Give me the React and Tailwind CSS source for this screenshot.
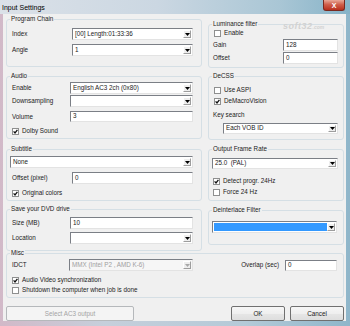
import React from 'react';

const Arrow = ({ disabled }) => (
  <svg width="5" height="3" viewBox="0 0 5 3">
    <path d="M0 0h5L2.5 3z" fill={disabled ? '#a8a8a8' : '#000'} />
  </svg>
);

const Tick = () => (
  <svg width="5" height="5" viewBox="0 0 5 5">
    <path d="M0.6 2.4L2 3.9L4.4 0.9" fill="none" stroke="#111" strokeWidth="1.3" />
  </svg>
);

function Group({ label, className = '', children }) {
  return (
    <div className={`relative rounded-[3px] border border-[#d5dfe5] ${className}`}>
      <span className="absolute -top-[5px] left-[3px] bg-[#f0f0f0] px-[1px] leading-[8px]">{label}</span>
      {children}
    </div>
  );
}

function Combo({ value, className = '', disabled, selected }) {
  return (
    <div
      className={`flex border border-t-[#7b7f86] border-l-[#7b7f86] border-r-[#e3e3e3] border-b-[#e3e3e3] p-[1px] ${
        disabled ? 'bg-[#f6f6f6] text-[#a0a0a0]' : 'bg-white'
      } ${className}`}
    >
      <div className={`flex flex-1 items-center truncate pl-[1px] leading-none ${selected ? 'bg-[#3399ff]' : ''}`}>{value}</div>
      <div className="flex w-[8px] items-center justify-center border border-t-white border-l-white border-r-[#9d9d9d] border-b-[#9d9d9d] bg-[#eeeeee]">
        <Arrow disabled={disabled} />
      </div>
    </div>
  );
}

function Field({ value, className = '' }) {
  return (
    <div
      className={`flex items-center border border-t-[#7b7f86] border-l-[#7b7f86] border-r-[#e3e3e3] border-b-[#e3e3e3] bg-white pl-[2px] leading-none ${className}`}
    >
      {value}
    </div>
  );
}

function Check({ label, checked, className = '' }) {
  return (
    <div className={`flex h-[8px] items-center ${className}`}>
      <span className="flex h-[7px] w-[7px] shrink-0 items-center justify-center border border-[#8e8f8f] bg-white">
        {checked && <Tick />}
      </span>
      <span className="ml-[3px] leading-[8px]">{label}</span>
    </div>
  );
}

export default function App() {
  return (
    <div className="flex h-[326px] w-[350px] flex-col bg-[linear-gradient(90deg,#d2b9c8_0%,#c6cfdb_30%,#b4cad8_70%,#8fb6ca_100%)] pl-[3px] pr-[4px] pb-[5px] font-[family-name:Liberation_Sans,Arial,sans-serif] text-[6.3px] text-[#1b1b1b]">
      {/* Title bar */}
      <div className="-ml-[3px] -mr-[4px] flex h-[14px] items-start justify-between bg-[linear-gradient(90deg,#dbe1e8_0%,#cbd7e2_45%,#a9c6d5_80%,#86b3c8_100%)]">
        <span className="pl-[2px] pt-[3px] text-[7px] leading-[9px] text-black">Input Settings</span>
        <div className="mr-[5px] flex h-[11px] w-[22px] items-center justify-center rounded-b-[3px] border border-t-0 border-[#7a2a20] bg-[linear-gradient(180deg,#e8a898_0%,#d0604c_45%,#b8301e_100%)] text-[7px] font-bold leading-none text-white">
          X
        </div>
      </div>

      {/* Body */}
      <div className="flex flex-1 flex-col bg-[#f0f0f0] pl-[3px] pr-[2px]">
        <div className="flex h-[237px] gap-[6px]">
          {/* Left column */}
          <div className="flex w-[196px] flex-col">
            <Group label="Program Chain" className="mt-[5px] h-[48px] pt-[8px] pl-[5px] pr-[8px]">
              <div className="flex items-center">
                <span className="w-[60px] shrink-0">Index</span>
                <Combo className="h-[12px] flex-1" value="[00] Length:01:33:36" />
              </div>
              <div className="mt-[4px] flex items-center">
                <span className="w-[60px] shrink-0">Angle</span>
                <Combo className="h-[12px] flex-1" value="1" />
              </div>
            </Group>

            <Group label="Audio" className="mt-[9px] h-[63px] pt-[5px] pl-[5px] pr-[8px]">
              <div className="flex items-center">
                <span className="w-[58px] shrink-0">Enable</span>
                <Combo className="h-[12px] flex-1" value="English AC3 2ch (0x80)" />
              </div>
              <div className="mt-[1px] flex items-center">
                <span className="w-[58px] shrink-0">Downsampling</span>
                <Combo className="h-[12px] flex-1" value="" />
              </div>
              <div className="mt-[4px] flex items-center">
                <span className="w-[58px] shrink-0">Volume</span>
                <Field className="h-[11px] flex-1" value="3" />
              </div>
              <Check className="mt-[5px]" label="Dolby Sound" checked />
            </Group>

            <Group label="Subtitle" className="mt-[10px] h-[52px] pt-[6px] pl-[3px] pr-[8px]">
              <Combo className="h-[12px]" value="None" />
              <div className="mt-[4px] ml-[2px] flex items-center">
                <span className="w-[60px] shrink-0">Offset (pixel)</span>
                <Field className="h-[12px] flex-1" value="0" />
              </div>
              <Check className="mt-[5px] ml-[2px]" label="Original colors" checked />
            </Group>

            <Group label="Save your DVD drive" className="mt-[8px] h-[42px] pt-[7px] pl-[5px] pr-[8px]">
              <div className="flex items-center">
                <span className="w-[58px] shrink-0">Size (MB)</span>
                <Field className="h-[12px] flex-1" value="10" />
              </div>
              <div className="mt-[3px] flex items-center">
                <span className="w-[58px] shrink-0">Location</span>
                <Combo className="h-[12px] flex-1" value="" />
              </div>
            </Group>
          </div>

          {/* Right column */}
          <div className="flex w-[136px] flex-col">
            <Group label="Luminance filter" className="mt-[10px] h-[44px] pt-[4px] pl-[4px] pr-[5px]">
              <span className="absolute -top-[3px] left-[74px] text-[9px] font-bold italic leading-[9px] tracking-[0.5px] text-[#d2d2d2]">
                soft32<span className="text-[5px] tracking-normal">.com</span>
              </span>
              <Check className="ml-[1px]" label="Enable" />
              <div className="mt-[2px] flex items-center">
                <span className="flex-1">Gain</span>
                <Field className="h-[12px] w-[55px]" value="128" />
              </div>
              <div className="mt-[1px] flex items-center">
                <span className="flex-1">Offset</span>
                <Field className="h-[12px] w-[55px]" value="0" />
              </div>
            </Group>

            <Group label="DeCSS" className="mt-[8px] h-[64px] pt-[9px] pl-[4px] pr-[5px]">
              <Check className="ml-[1px]" label="Use ASPI" />
              <Check className="mt-[3px] ml-[1px]" label="DeMacroVision" checked />
              <div className="mt-[6px] h-[8px] leading-[8px]">Key search</div>
              <Combo className="mt-[4px] ml-[10px] h-[11px]" value="Each VOB ID" />
            </Group>

            <Group label="Output Frame Rate" className="mt-[9px] h-[52px] pt-[8px] pl-[3px] pr-[5px]">
              <Combo className="h-[11px]" value={'25.0\u00a0\u00a0(PAL)'} />
              <Check className="mt-[8px] ml-[1px]" label="Detect progr. 24Hz" checked />
              <Check className="mt-[3px] ml-[1px]" label="Force 24 Hz" />
            </Group>

            <Group label="Deinterlace Filter" className="mt-[9px] h-[35px] pt-[10px] pl-[3px] pr-[6px]">
              <Combo className="h-[12px]" value="" selected />
            </Group>
          </div>
        </div>

        {/* Misc */}
        <Group label="Misc" className="mt-[2px] h-[45px] w-[338px] pt-[5px] pl-[5px] pr-[6px]">
          <div className="flex items-center">
            <span className="w-[57px] shrink-0">IDCT</span>
            <Combo className="h-[12px] w-[124px]" value="MMX (Intel P2 , AMD K-6)" disabled />
            <span className="ml-auto">Overlap (sec)</span>
            <Field className="ml-[6px] h-[11px] w-[52px]" value="0" />
          </div>
          <Check className="mt-[5px]" label="Audio Video synchronization" checked />
          <Check className="mt-[2px]" label="Shutdown the computer when job is done" />
        </Group>

        {/* Buttons */}
        <div className="mt-[8px] flex h-[15px] w-[338px]">
          <div className="flex w-[128px] items-center justify-center rounded-[2px] border border-[#b5b8bb] bg-[#f4f4f4] text-[#a3a3a3]">
            Select AC3 output
          </div>
          <div className="ml-auto flex w-[54px] items-center justify-center rounded-[2px] border border-[#707070] bg-[linear-gradient(180deg,#f6f6f6_0%,#efefef_50%,#e6e6e6_51%,#dedede_100%)]">
            OK
          </div>
          <div className="ml-[5px] flex w-[54px] items-center justify-center rounded-[2px] border border-[#707070] bg-[linear-gradient(180deg,#f6f6f6_0%,#efefef_50%,#e6e6e6_51%,#dedede_100%)]">
            Cancel
          </div>
        </div>
      </div>
    </div>
  );
}
